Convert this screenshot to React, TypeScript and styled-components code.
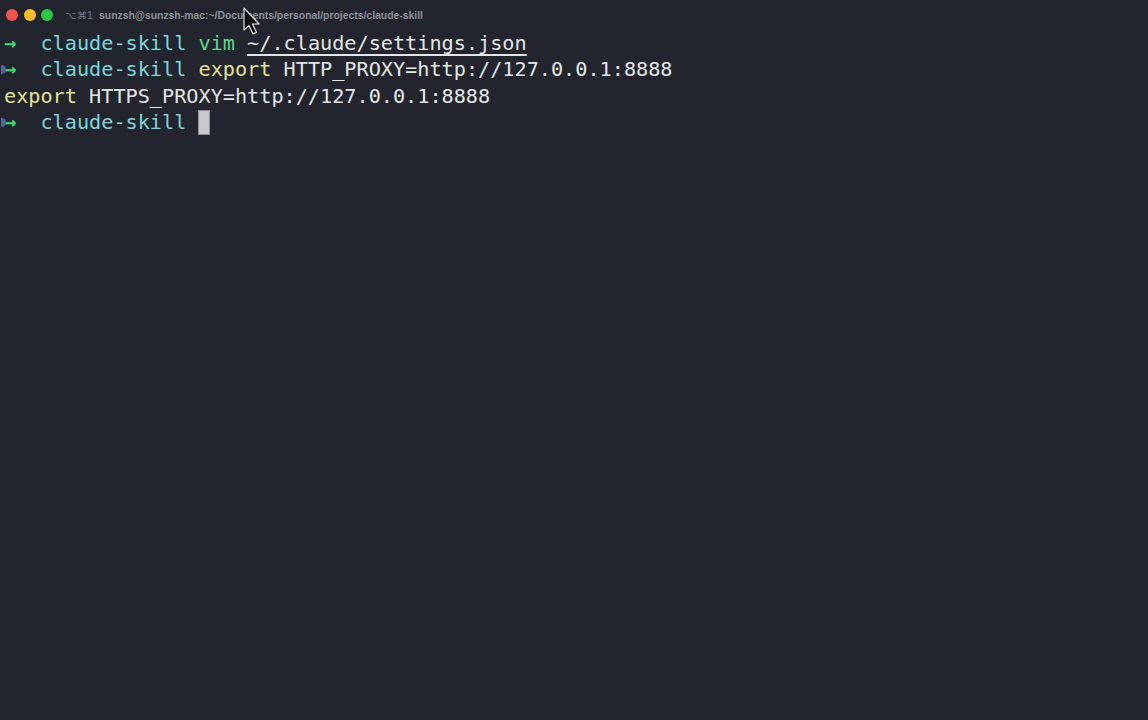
import styled, { createGlobalStyle } from "styled-components";

const Global = createGlobalStyle`
  html, body { margin: 0; padding: 0; background: #22252d; }
  #root { height: 100vh; }
`;

const Window = styled.div`
  position: relative;
  height: 100vh;
  display: flex;
  flex-direction: column;
  background: #22252d;
  overflow: hidden;
`;

const TitleBar = styled.div`
  height: 30px;
  display: flex;
  align-items: center;
  padding-left: 6px;
  font-family: "Liberation Sans", Arial, sans-serif;
  font-size: 10.4px;
  font-weight: 700;
  color: #8d9097;
`;

const Lights = styled.div`
  display: flex;
  gap: 5.5px;
  margin-right: 12px;
`;

const Light = styled.span<{ $c: string }>`
  width: 12px;
  height: 12px;
  border-radius: 50%;
  background: ${(p) => p.$c};
`;

const Shortcut = styled.span`
  width: 34px;
  font-weight: 400;
  color: #7a7d84;
`;

const Body = styled.div`
  flex: 1;
  padding-left: 4px;
  font-family: "DejaVu Sans Mono", "Liberation Mono", monospace;
  font-size: 20.2px;
  line-height: 26.4px;
  color: #e4e5e7;
  white-space: pre;
`;

const Line = styled.div`
  position: relative;
`;

const Mark = styled.span`
  position: absolute;
  left: -3px;
  top: 9px;
  width: 5px;
  height: 9px;
  border-radius: 0 5px 5px 0;
  background: #4f64a0;
`;

const Arrow = styled.span`
  color: #3ddc6f;
  font-weight: 700;
`;

const Dir = styled.span`
  color: #7fd4d9;
`;

const Cmd = styled.span<{ $c: string }>`
  color: ${(p) => p.$c};
`;

const Path = styled.span`
  text-decoration: underline;
  text-underline-offset: 4px;
  text-decoration-thickness: 1.5px;
`;

const Caret = styled.span`
  display: inline-block;
  width: 12px;
  height: 25px;
  vertical-align: -6px;
  background: #c9cace;
  border: 1px solid #8e9096;
  box-sizing: border-box;
`;

const Pointer = styled.svg`
  position: absolute;
  left: 242px;
  top: 6px;
`;

export default function App() {
  return (
    <Window>
      <Global />
      <TitleBar>
        <Lights>
          <Light $c="#f2544d" />
          <Light $c="#f6bd2c" />
          <Light $c="#2bc840" />
        </Lights>
        <Shortcut>⌥⌘1</Shortcut>
        <span>sunzsh@sunzsh-mac:~/Documents/personal/projects/claude-skill</span>
      </TitleBar>
      <Body>
        <Line>
          <Arrow>→</Arrow>  <Dir>claude-skill</Dir> <Cmd $c="#5ed68d">vim</Cmd>{" "}
          <Path>~/.claude/settings.json</Path>
        </Line>
        <Line>
          <Mark />
          <Arrow>→</Arrow>  <Dir>claude-skill</Dir> <Cmd $c="#e6e39a">export</Cmd> HTTP_PROXY=http://127.0.0.1:8888
        </Line>
        <Line>
          <Cmd $c="#e6e39a">export</Cmd> HTTPS_PROXY=http://127.0.0.1:8888
        </Line>
        <Line>
          <Mark />
          <Arrow>→</Arrow>  <Dir>claude-skill</Dir> <Caret />
        </Line>
      </Body>
      <Pointer width="20" height="30" viewBox="0 0 20 30">
        <path
          d="M2 2 L2 24 L7 19.5 L11 28 L14.5 26.5 L10.5 18 L17 18 Z"
          fill="#0c0c0c"
          stroke="#f4f4f4"
          strokeWidth="1.1"
          strokeLinejoin="round"
        />
      </Pointer>
    </Window>
  );
}
